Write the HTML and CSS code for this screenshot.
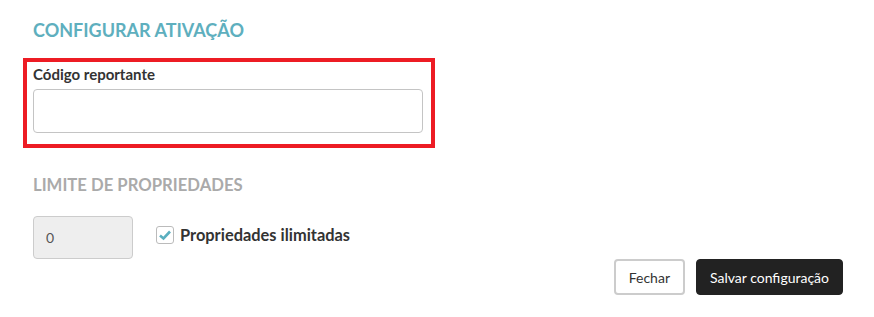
FILE: index.html
```html
<!DOCTYPE html>
<html lang="pt-BR">
<head>
    <meta charset="UTF-8"/>
    <title>Configurar ativação</title>
    <link rel="stylesheet" href="styles.css">
</head>
<body>
<div class="panel">
    <h2 class="title">CONFIGURAR ATIVAÇÃO</h2>

    <div class="field highlight">
        <label for="codigo">Código reportante</label>
        <input type="text" id="codigo" class="text-input"/>
    </div>

    <h3 class="subtitle">LIMITE DE PROPRIEDADES</h3>

    <div class="limit-row">
        <input type="text" class="number-input" value="0" disabled/>
        <label class="check">
            <span class="box">
                <svg width="14" height="12" viewBox="0 0 14 12"><path d="M2 6.5 L5.5 9.5 L12 2.5" fill="none" stroke="#5aafbf" stroke-width="2.6"/></svg>
            </span>
            Propriedades ilimitadas
        </label>
    </div>

    <div class="actions">
        <button type="button" class="btn btn-light">Fechar</button>
        <button type="button" class="btn btn-dark">Salvar configuração</button>
    </div>
</div>
</body>
</html>
```

FILE: styles.css
```css
body {
    margin: 0;
    background-color: #fff;
    font-family: Lato, "Open Sans", sans-serif;
    color: #333;
}

.panel {
    width: 810px;
    padding: 18px 0 0 33px;
}

.title {
    margin: 0 0 16px;
    font-size: 18px;
    font-weight: 700;
    color: #5eafbe;
    line-height: 24px;
}

.field {
    display: flex;
    flex-direction: column;
}

.highlight {
    width: 390px;
    margin-left: -10px;
    padding: 2px 8px 11px 6px;
    border: 4px solid #ed1c24;
}

.field label {
    font-size: 15px;
    font-weight: 700;
    line-height: 20px;
    margin: 0 0 5px;
    color: #333;
}

.text-input {
    height: 44px;
    box-sizing: border-box;
    border: 1px solid #c4c4c4;
    border-radius: 4px;
    font-size: 14px;
    padding: 0 12px;
}

.subtitle {
    margin: 26px 0 20px;
    font-size: 16.7px;
    font-weight: 700;
    color: #aaa;
    line-height: 22px;
}

.limit-row {
    display: flex;
    align-items: center;
    gap: 23px;
}

.number-input {
    width: 100px;
    height: 43px;
    box-sizing: border-box;
    background-color: #eee;
    border: 1px solid #ccc;
    border-radius: 4px;
    padding: 0 12px;
    font-family: inherit;
    font-size: 14px;
    color: #555;
}

.check {
    display: flex;
    align-items: center;
    gap: 6px;
    font-size: 16.4px;
    font-weight: 700;
    color: #333;
    margin-top: -6px;
}

.box {
    width: 16px;
    height: 16px;
    border: 1px solid #bbb;
    border-radius: 3px;
    display: flex;
    align-items: center;
    justify-content: center;
}

.actions {
    display: flex;
    justify-content: flex-end;
    gap: 11px;
    margin-top: 0;
}

.btn {
    height: 36px;
    padding: 0 13px;
    border-radius: 4px;
    font-family: inherit;
    font-size: 14px;
    cursor: pointer;
}

.btn-light {
    background-color: #fff;
    border: 2px solid #ccc;
    color: #333;
}

.btn-dark {
    background-color: #222;
    border: 1px solid #222;
    color: #fff;
}
```
